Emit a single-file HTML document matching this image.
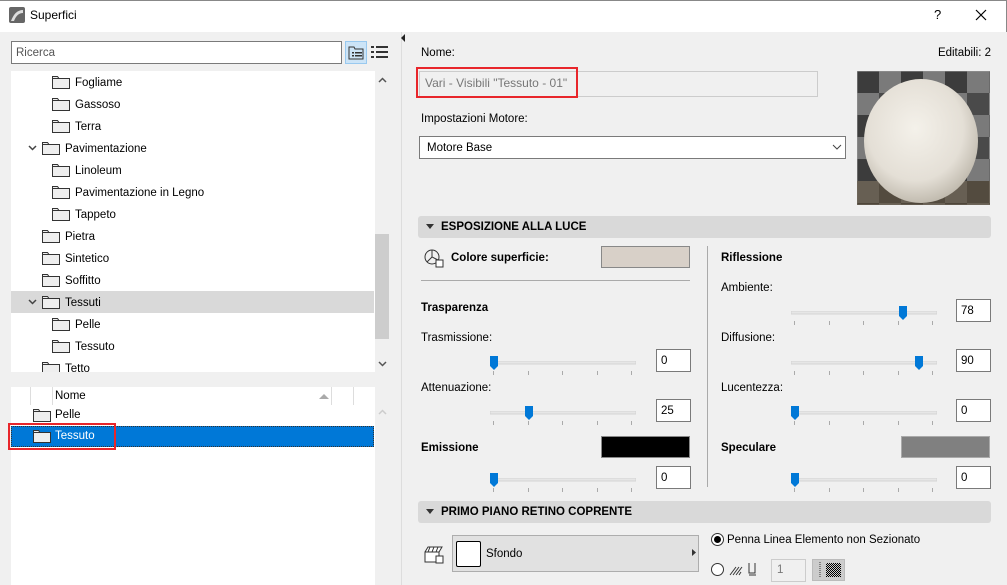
<!DOCTYPE html>
<html><head><meta charset="utf-8"><style>
*{box-sizing:border-box;margin:0;padding:0}
body{width:1007px;height:585px;overflow:hidden;background:#f0f0f0;font-family:"Liberation Sans",sans-serif;font-size:11.5px;color:#000;position:relative}
.a{position:absolute}
.t{position:absolute;white-space:nowrap;line-height:14px}
.b{font-weight:bold}
.fold{position:absolute;width:18px;height:14px}
.inp{position:absolute;background:#fff;border:1px solid #7a7a7a;width:35px;height:23px;padding:4px 0 0 4px;line-height:14px}
.th{position:absolute;width:8px;height:14px}
</style></head><body>
<div class="a" style="left:0;top:0;width:1007px;height:32px;background:#fff;border-top:1px solid #888;border-right:1px solid #888"></div>
<svg class="a" style="left:9px;top:7px" width="16" height="16"><rect width="16" height="16" rx="2" fill="#666"/><path d="M2 14 Q6 3 14 3 L14 6 Q8 6 5 14Z" fill="#ddd"/></svg>
<div class="t" style="left:30px;top:8px;font-size:12px">Superfici</div>
<div class="t" style="left:934px;top:8px;font-size:13px">?</div>
<svg class="a" style="left:975px;top:9px" width="12" height="12"><path d="M1 1L11 11M11 1L1 11" stroke="#000" stroke-width="1.2"/></svg>

<div class="a" style="left:11px;top:41px;width:331px;height:23px;background:#fff;border:1px solid #7a7a7a"></div>
<div class="t" style="left:16px;top:46px;color:#555">Ricerca</div>
<div class="a" style="left:345px;top:41px;width:22px;height:23px;background:#cce4f7;border:1px solid #99c9ef"></div>
<svg class="a" style="left:348px;top:45px" width="17" height="16"><path d="M1 2h5l1 2h8v10H1z" fill="none" stroke="#333"/><rect x="7" y="7" width="7" height="1.5" fill="#333"/><rect x="7" y="10" width="7" height="1.5" fill="#333"/><rect x="4" y="7" width="2" height="1.5" fill="#333"/><rect x="4" y="10" width="2" height="1.5" fill="#333"/></svg>
<svg class="a" style="left:371px;top:46px" width="17" height="13"><g fill="#333"><rect x="0" y="0" width="3" height="2"/><rect x="5" y="0" width="12" height="2"/><rect x="0" y="5" width="3" height="2"/><rect x="5" y="5" width="12" height="2"/><rect x="0" y="10" width="3" height="2"/><rect x="5" y="10" width="12" height="2"/></g></svg>

<div class="a" style="left:11px;top:71px;width:364px;height:301px;background:#fff"></div>
<div class="a" style="left:11px;top:291px;width:363px;height:22px;background:#d9d9d9"></div>
<div class="a" style="left:375px;top:234px;width:14px;height:105px;background:#cdcdcd"></div>
<svg class="a" style="left:378px;top:77px" width="9" height="6"><path d="M1 5L4.5 1.5L8 5" fill="none" stroke="#555" stroke-width="1.5"/></svg>
<svg class="a" style="left:378px;top:361px" width="9" height="6"><path d="M1 1L4.5 4.5L8 1" fill="none" stroke="#555" stroke-width="1.5"/></svg>

<svg width="0" height="0" style="position:absolute"><defs><symbol id="f" viewBox="0 0 18 14"><path d="M0.5 1.5h5l1.5 2h10.5v10H0.5z" fill="#eee" stroke="#333"/><path d="M0.5 3.5h17" stroke="#333"/></symbol></defs></svg>

<svg class="fold" style="left:52px;top:75px"><use href="#f"/></svg><div class="t" style="left:75px;top:76px">Fogliame</div>
<svg class="fold" style="left:52px;top:97px"><use href="#f"/></svg><div class="t" style="left:75px;top:98px">Gassoso</div>
<svg class="fold" style="left:52px;top:119px"><use href="#f"/></svg><div class="t" style="left:75px;top:120px">Terra</div>
<svg class="a" style="left:28px;top:145px" width="9" height="6"><path d="M1 1L4.5 4.5L8 1" fill="none" stroke="#444" stroke-width="1.5"/></svg>
<svg class="fold" style="left:42px;top:141px"><use href="#f"/></svg><div class="t" style="left:65px;top:142px">Pavimentazione</div>
<svg class="fold" style="left:52px;top:163px"><use href="#f"/></svg><div class="t" style="left:75px;top:164px">Linoleum</div>
<svg class="fold" style="left:52px;top:185px"><use href="#f"/></svg><div class="t" style="left:75px;top:186px">Pavimentazione in Legno</div>
<svg class="fold" style="left:52px;top:207px"><use href="#f"/></svg><div class="t" style="left:75px;top:208px">Tappeto</div>
<svg class="fold" style="left:42px;top:229px"><use href="#f"/></svg><div class="t" style="left:65px;top:230px">Pietra</div>
<svg class="fold" style="left:42px;top:251px"><use href="#f"/></svg><div class="t" style="left:65px;top:252px">Sintetico</div>
<svg class="fold" style="left:42px;top:273px"><use href="#f"/></svg><div class="t" style="left:65px;top:274px">Soffitto</div>
<svg class="a" style="left:28px;top:299px" width="9" height="6"><path d="M1 1L4.5 4.5L8 1" fill="none" stroke="#444" stroke-width="1.5"/></svg>
<svg class="fold" style="left:42px;top:295px"><use href="#f"/></svg><div class="t" style="left:65px;top:296px">Tessuti</div>
<svg class="fold" style="left:52px;top:317px"><use href="#f"/></svg><div class="t" style="left:75px;top:318px">Pelle</div>
<svg class="fold" style="left:52px;top:339px"><use href="#f"/></svg><div class="t" style="left:75px;top:340px">Tessuto</div>
<div class="a" style="left:42px;top:361px;width:300px;height:11px;overflow:hidden"><svg class="fold" style="left:0;top:0"><use href="#f"/></svg><div class="t" style="left:23px;top:1px">Tetto</div></div>

<div class="a" style="left:11px;top:387px;width:364px;height:198px;background:#fff"></div>
<div class="a" style="left:30px;top:387px;width:1px;height:18px;background:#ddd"></div>
<div class="a" style="left:52px;top:387px;width:1px;height:18px;background:#ddd"></div>
<div class="a" style="left:331px;top:387px;width:1px;height:18px;background:#ddd"></div>
<div class="a" style="left:353px;top:387px;width:1px;height:18px;background:#ddd"></div>
<div class="t" style="left:55px;top:389px">Nome</div>
<svg class="a" style="left:319px;top:393px" width="10" height="6"><path d="M0 6L5 1L10 6Z" fill="#aaa"/></svg>
<svg class="a" style="left:378px;top:409px" width="9" height="6"><path d="M1 5L4.5 1.5L8 5" fill="none" stroke="#ccc" stroke-width="1.5"/></svg>
<svg class="fold" style="left:33px;top:408px"><use href="#f"/></svg><div class="t" style="left:55px;top:408px">Pelle</div>
<div class="a" style="left:11px;top:426px;width:363px;height:21px;background:#0078d7;border:1px dotted #333"></div>
<svg class="fold" style="left:33px;top:429px"><use href="#f"/></svg><div class="t" style="left:55px;top:429px;color:#fff">Tessuto</div>
<div class="a" style="left:8px;top:423px;width:108px;height:27px;border:2px solid #e8262b"></div>

<div class="a" style="left:401px;top:32px;width:1px;height:553px;background:#ddd"></div>
<svg class="a" style="left:401px;top:34px" width="4" height="8"><path d="M4 0L0 4L4 8Z" fill="#222"/></svg>

<div class="t" style="left:421px;top:46px">Nome:</div>
<div class="t" style="right:16px;top:46px">Editabili: 2</div>
<div class="a" style="left:419px;top:71px;width:399px;height:26px;border:1px solid #ccc;background:#f0f0f0"></div>
<div class="t" style="left:425px;top:76px;color:#777;font-size:12px">Vari - Visibili "Tessuto - 01"</div>
<div class="a" style="left:416px;top:67px;width:162px;height:31px;border:2px solid #e8262b"></div>
<div class="t" style="left:421px;top:112px">Impostazioni Motore:</div>
<div class="a" style="left:419px;top:136px;width:427px;height:23px;background:#fff;border:1px solid #7a7a7a"></div>
<div class="t" style="left:427px;top:141px">Motore Base</div>
<svg class="a" style="left:832px;top:144px" width="10" height="6"><path d="M1 1L5 5L9 1" fill="none" stroke="#444"/></svg>
<svg class="a" style="left:857px;top:71px" width="133" height="134" viewBox="0 0 133 134">
<defs><radialGradient id="g" cx="45%" cy="40%" r="60%"><stop offset="0" stop-color="#f4f1ea"/><stop offset=".7" stop-color="#e4dfd6"/><stop offset="1" stop-color="#c2bcb0"/></radialGradient>
<pattern id="c" width="44" height="44" patternUnits="userSpaceOnUse"><rect width="44" height="44" fill="#7a7a7a"/><rect width="22" height="22" fill="#3c3c3c"/><rect x="22" y="22" width="22" height="22" fill="#4a4a4a"/></pattern></defs>
<rect width="133" height="134" fill="url(#c)" stroke="#999"/>
<rect y="110" width="133" height="24" fill="#5a4c38" opacity=".6"/>
<ellipse cx="64" cy="70" rx="57" ry="62" fill="url(#g)"/>
</svg>

<div class="a" style="left:418px;top:216px;width:573px;height:22px;background:#d9d9d9;border-radius:3px"></div>
<svg class="a" style="left:426px;top:224px" width="8" height="5"><path d="M0 0H8L4 5Z" fill="#333"/></svg>
<div class="t b" style="left:441px;top:220px">ESPOSIZIONE ALLA LUCE</div>

<svg class="a" style="left:424px;top:249px" width="20" height="19"><circle cx="8" cy="8" r="7" fill="none" stroke="#333"/><path d="M8 1V8L14 11M8 8L3 13" stroke="#333" fill="none"/><rect x="12" y="11" width="7" height="7" fill="#fff" stroke="#333"/></svg>
<div class="t b" style="left:451px;top:251px">Colore superficie:</div>
<div class="a" style="left:601px;top:246px;width:89px;height:22px;background:#d8d0c8;border:1px solid #888"></div>
<div class="a" style="left:421px;top:280px;width:269px;height:1px;background:#aaa"></div>
<div class="a" style="left:707px;top:246px;width:1px;height:241px;background:#aaa"></div>
<div class="t b" style="left:721px;top:251px">Riflessione</div>
<div class="t b" style="left:421px;top:301px">Trasparenza</div>
<div class="t" style="left:421px;top:331px">Trasmissione:</div>
<div class="t" style="left:421px;top:381px">Attenuazione:</div>
<div class="t b" style="left:421px;top:441px">Emissione</div>
<div class="a" style="left:601px;top:436px;width:89px;height:22px;background:#000;border:1px solid #888"></div>
<div class="t" style="left:721px;top:281px">Ambiente:</div>
<div class="t" style="left:721px;top:331px">Diffusione:</div>
<div class="t" style="left:721px;top:381px">Lucentezza:</div>
<div class="t b" style="left:721px;top:441px">Speculare</div>
<div class="a" style="left:901px;top:436px;width:89px;height:22px;background:#808080;border:1px solid #aaa"></div>

<svg width="0" height="0" style="position:absolute"><defs><symbol id="th" viewBox="0 0 8 14"><path d="M0 0H8V10L4 14L0 10Z" fill="#0078d7"/></symbol>
<symbol id="sl" viewBox="0 0 146 16"><rect x="0" y="0" width="146" height="3" fill="#e6e6e6" stroke="#d4d4d4"/><g fill="#aaa"><rect x="3" y="10" width="1" height="4"/><rect x="38" y="10" width="1" height="4"/><rect x="72" y="10" width="1" height="4"/><rect x="107" y="10" width="1" height="4"/><rect x="141" y="10" width="1" height="4"/></g></symbol></defs></svg>

<svg class="a" style="left:490px;top:361px" width="146" height="16"><use href="#sl"/></svg><svg class="th" style="left:490px;top:356px"><use href="#th"/></svg>
<div class="inp" style="left:656px;top:349px">0</div>
<svg class="a" style="left:490px;top:411px" width="146" height="16"><use href="#sl"/></svg><svg class="th" style="left:525px;top:406px"><use href="#th"/></svg>
<div class="inp" style="left:656px;top:399px">25</div>
<svg class="a" style="left:490px;top:478px" width="146" height="16"><use href="#sl"/></svg><svg class="th" style="left:490px;top:473px"><use href="#th"/></svg>
<div class="inp" style="left:656px;top:466px">0</div>
<svg class="a" style="left:791px;top:311px" width="146" height="16"><use href="#sl"/></svg><svg class="th" style="left:899px;top:306px"><use href="#th"/></svg>
<div class="inp" style="left:956px;top:299px">78</div>
<svg class="a" style="left:791px;top:361px" width="146" height="16"><use href="#sl"/></svg><svg class="th" style="left:915px;top:356px"><use href="#th"/></svg>
<div class="inp" style="left:956px;top:349px">90</div>
<svg class="a" style="left:791px;top:411px" width="146" height="16"><use href="#sl"/></svg><svg class="th" style="left:791px;top:406px"><use href="#th"/></svg>
<div class="inp" style="left:956px;top:399px">0</div>
<svg class="a" style="left:791px;top:478px" width="146" height="16"><use href="#sl"/></svg><svg class="th" style="left:791px;top:473px"><use href="#th"/></svg>
<div class="inp" style="left:956px;top:466px">0</div>

<div class="a" style="left:418px;top:501px;width:573px;height:22px;background:#d9d9d9;border-radius:3px"></div>
<svg class="a" style="left:426px;top:509px" width="8" height="5"><path d="M0 0H8L4 5Z" fill="#333"/></svg>
<div class="t b" style="left:441px;top:505px">PRIMO PIANO RETINO COPRENTE</div>

<svg class="a" style="left:424px;top:546px" width="20" height="18"><path d="M1 6h14v10H1z M1 6l3-5h14l-3 5" fill="#fff" stroke="#333"/><path d="M6 1l-2 5M10 1l-2 5M14 1l-2 5" stroke="#333"/><rect x="12" y="10" width="7" height="7" fill="#fff" stroke="#333"/></svg>
<div class="a" style="left:452px;top:535px;width:247px;height:37px;background:#e1e1e1;border:1px solid #adadad"></div>
<div class="a" style="left:456px;top:541px;width:25px;height:26px;background:#fff;border:1px solid #000;border-radius:2px"></div>
<div class="t" style="left:486px;top:547px">Sfondo</div>
<svg class="a" style="left:692px;top:549px" width="4" height="7"><path d="M0 0L4 3.5L0 7Z" fill="#333"/></svg>
<svg class="a" style="left:711px;top:533px" width="13" height="13"><circle cx="6.5" cy="6.5" r="6" fill="#fff" stroke="#333"/><circle cx="6.5" cy="6.5" r="3.5" fill="#000"/></svg>
<div class="t" style="left:727px;top:533px">Penna Linea Elemento non Sezionato</div>
<svg class="a" style="left:711px;top:563px" width="13" height="13"><circle cx="6.5" cy="6.5" r="6" fill="#fff" stroke="#333"/></svg>
<svg class="a" style="left:729px;top:561px" width="28" height="16"><path d="M1 14L7 6M4 14L10 6M7 14L13 6M10 14l2-3" stroke="#333"/><path d="M20 2V12H26V2M20 14H27" stroke="#333" fill="none"/></svg>
<div class="a" style="left:771px;top:559px;width:35px;height:23px;border:1px solid #ccc;background:#f0f0f0;color:#777;padding:4px 0 0 5px">1</div>
<div class="a" style="left:812px;top:559px;width:33px;height:22px;background:#ccc;border:1px solid #bbb"></div>
<svg class="a" style="left:818px;top:562px" width="24" height="16"><path d="M2 0V16" stroke="#333" stroke-dasharray="1 1"/><pattern id="ck" width="2" height="2" patternUnits="userSpaceOnUse"><rect width="1" height="1" fill="#000"/><rect x="1" y="1" width="1" height="1" fill="#000"/></pattern><rect x="8" y="1" width="15" height="14" fill="url(#ck)"/></svg>
</body></html>
